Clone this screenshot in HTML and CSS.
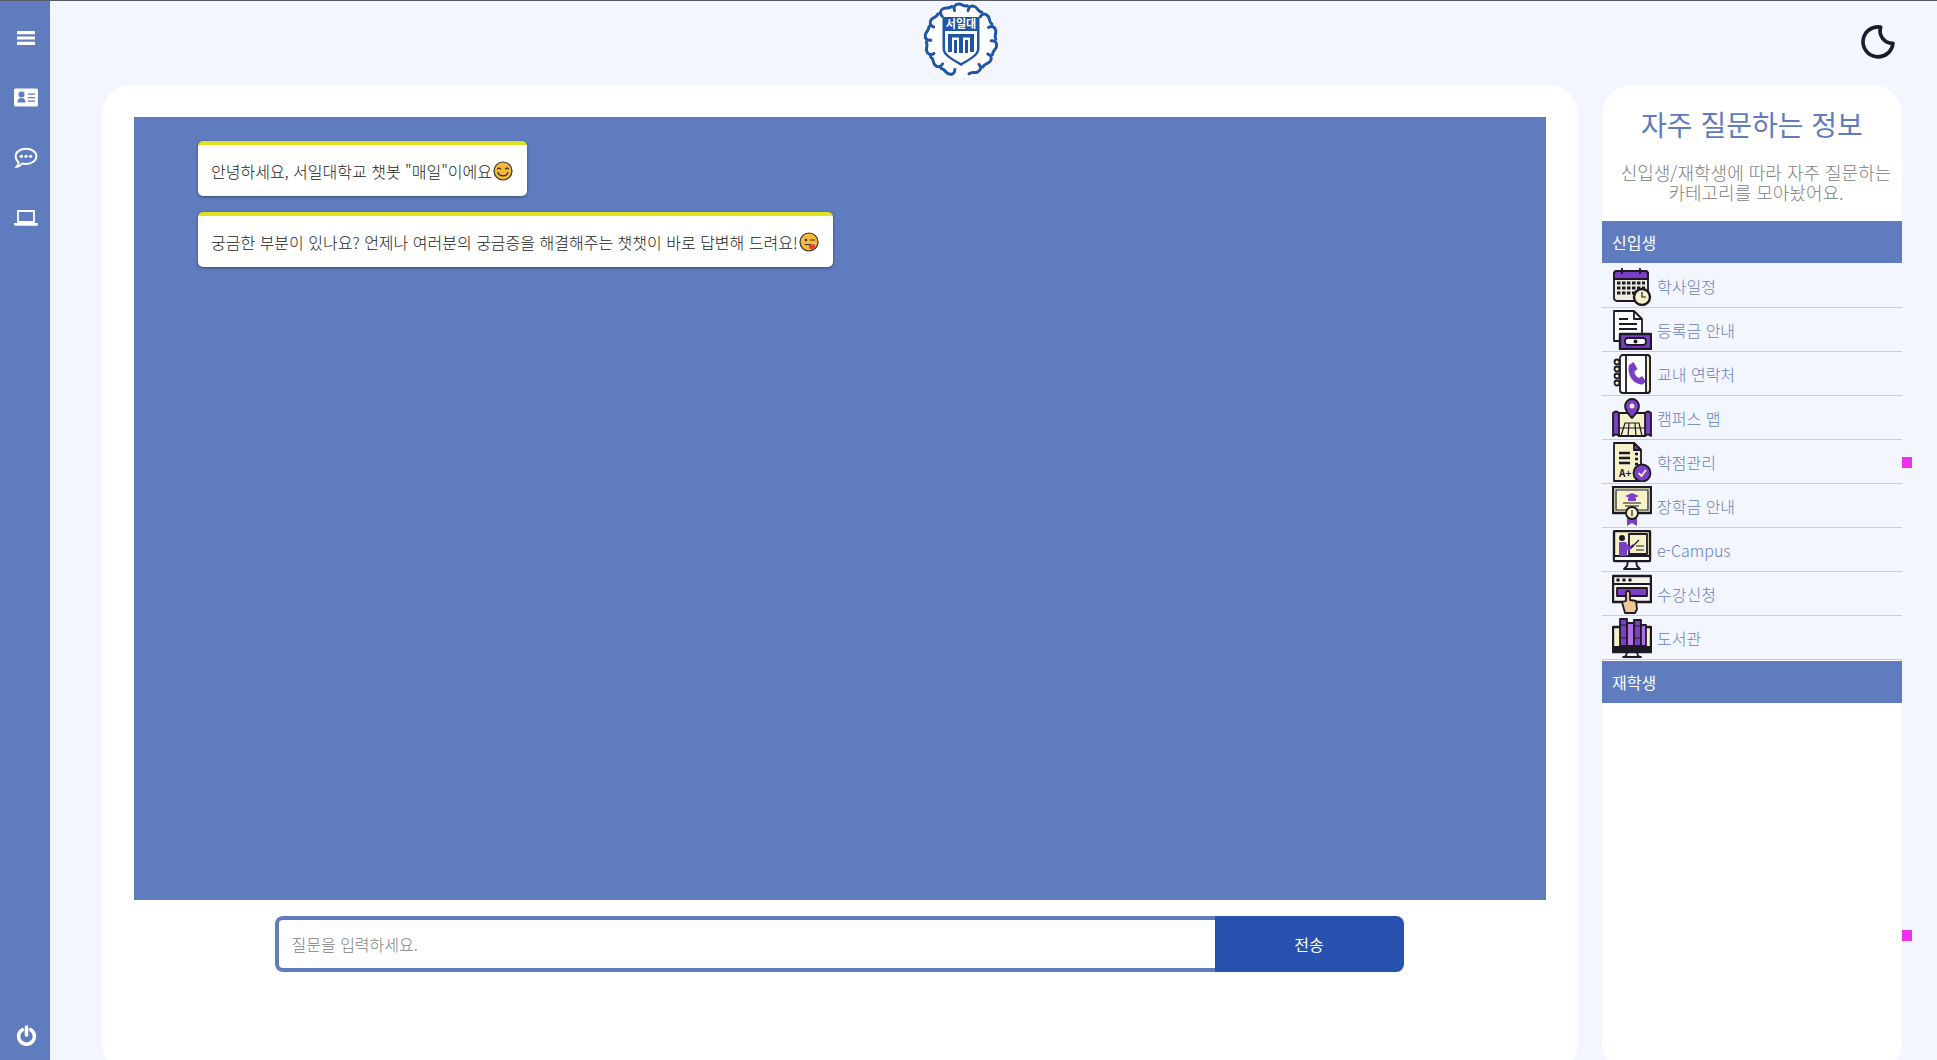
FILE: index.html
```html
<!DOCTYPE html><html lang="ko">
<head>
  <meta charset="UTF-8">
  <meta name="viewport" content="width=device-width, initial-scale=1.0">
  <title>서일대학교 챗봇</title>
  <link rel="stylesheet" href="styles.css">
</head>
<body>
  <aside class="sidebar">
    <nav class="side-nav">
      <a class="side-link"><svg class="side-icon menu-icon" viewBox="0 0 18 16"><path d="M0 1h18v3.200H0zM0 6.400h18v3.200H0zM0 11.800h18V15H0z" fill="#fff"/></svg></a>
      <a class="side-link"><svg class="side-icon" viewBox="0 0 24 19"><path d="M1.500 0h21A1.500 1.500 0 0 1 24 1.500v15a1.500 1.500 0 0 1-1.500 1.500h-21A1.500 1.500 0 0 1 0 16.500v-15A1.500 1.500 0 0 1 1.500 0z" fill="#fff"/><circle cx="7.500" cy="6" r="3" fill="#5f7cbf"/><path d="M3.500 14c0-3 1.500-4.500 4-4.500s4 1.500 4 4.500zM14 5h7v1.300h-7zM14 8.500h7v1.300h-7zM14 12h7v1.300h-7z" fill="#5f7cbf"/></svg></a>
      <a class="side-link"><svg class="side-icon" viewBox="0 0 22 20"><path d="M11 1.500c5.300 0 9.500 3 9.500 7s-4.200 7-9.500 7c-1.200 0-2.300-.1-3.300-.4C6.300 16.600 4.500 18 2.500 18c1-1 1.700-2.300 1.800-3.900C2.600 12.800 1.500 10.800 1.500 8.500c0-4 4.200-7 9.500-7z" fill="none" stroke="#fff" stroke-width="1.800"/><circle cx="6.800" cy="8.500" r="1.500" fill="#fff"/><circle cx="11" cy="8.500" r="1.500" fill="#fff"/><circle cx="15.200" cy="8.500" r="1.500" fill="#fff"/></svg></a>
      <a class="side-link"><svg class="side-icon" viewBox="0 0 24 16"><path d="M4 1h16v11H4z" fill="none" stroke="#fff" stroke-width="1.800"/><path d="M0 13h24v1.200a1.500 1.500 0 0 1-1.500 1.500h-21A1.500 1.500 0 0 1 0 14.200z" fill="#fff"/></svg></a>
    </nav>
    <a class="side-link"><svg class="side-icon power-icon" viewBox="0 0 20 20"><path d="M6 4.500a7.500 7.500 0 1 0 8 0" fill="none" stroke="#fff" stroke-width="3.400" stroke-linecap="round"/><path d="M10 2v7.500" stroke="#fff" stroke-width="3.400" stroke-linecap="round"/></svg></a>
  </aside>

  <div class="page">
    <header class="topbar">
      <svg class="logo" viewBox="0 0 76 76">
        <defs>
          <path id="leaf" d="M31.500 8.500c-1.500-3.500.5-6.500 4.500-6.500 3.500 0 4.500 3 8.500 1.800" fill="none" stroke="#1f55a5" stroke-width="3" stroke-linecap="round"/>
        </defs>
        <circle cx="38" cy="38" r="38" fill="#fff"/>
        <use href="#leaf"/>
        <use href="#leaf" transform="rotate(26 38 38)"/>
        <use href="#leaf" transform="rotate(52 38 38)"/>
        <use href="#leaf" transform="rotate(78 38 38)"/>
        <use href="#leaf" transform="rotate(104 38 38)"/>
        <use href="#leaf" transform="rotate(130 38 38)"/>
        <use href="#leaf" transform="rotate(156 38 38)"/>
        <use href="#leaf" transform="rotate(-26 38 38)"/>
        <use href="#leaf" transform="rotate(-52 38 38)"/>
        <use href="#leaf" transform="rotate(-78 38 38)"/>
        <use href="#leaf" transform="rotate(-104 38 38)"/>
        <use href="#leaf" transform="rotate(-130 38 38)"/>
        <use href="#leaf" transform="rotate(-156 38 38)"/>
        <path d="M19.500 15h37v32c0 7-11 12-18.500 17C30.500 59 19.500 54 19.500 47z" fill="#1f55a5"/>
        <path d="M22 29h32v18c0 5.500-9 10-16 14-7-4-16-8.500-16-14z" fill="#fff"/>
        <path d="M25 32h26v3.500H25zM25 32h4v18h-4zM36 32h4v19h-4zM47 32h4v18h-4zM31 38h3v13h-3zM42 38h3v13h-3z" fill="#1f55a5"/>
        <text class="logo-text" x="38" y="26" text-anchor="middle">서일대</text>
      </svg>
      <svg class="moon" viewBox="0 0 24 24"><path d="M12 3c.132 0 .263 0 .393 0a7.500 7.500 0 0 0 7.370 9.750a9 9 0 1 1-7.763-9.750z" fill="none" stroke="#1a1c2e" stroke-width="2.200" stroke-linejoin="round"/></svg>
    </header>

    <div class="content">
      <main class="chat-card">
        <section class="chat-log">
          <div class="bubble">안녕하세요, 서일대학교 챗봇 "매일"이에요<svg class="emoji" viewBox="0 0 20 20"><circle cx="10" cy="10" r="9" fill="#f5b93a" stroke="#33302a" stroke-width="1.200"/><path d="M4.500 8c.7-1.300 2.300-1.300 3 0M12.500 8c.7-1.300 2.300-1.300 3 0M5 11.500c1.500 4.500 8.500 4.500 10 0" fill="none" stroke="#33302a" stroke-width="1.200" stroke-linecap="round"/></svg></div>
          <div class="bubble">궁금한 부분이 있나요? 언제나 여러분의 궁금증을 해결해주는 챗챗이 바로 답변해 드려요!<svg class="emoji" viewBox="0 0 20 20"><circle cx="10" cy="10" r="9" fill="#f5b93a" stroke="#33302a" stroke-width="1.200"/><circle cx="7" cy="8" r="1.200" fill="#33302a"/><path d="M11.500 8h4M6 12.500h6" fill="none" stroke="#33302a" stroke-width="1.200" stroke-linecap="round"/><path d="M10 12.500h6v2a3 3 0 0 1-6 0z" fill="#e0413a"/></svg></div>
        </section>
        <form class="chat-form">
          <input class="chat-input" type="text" placeholder="질문을 입력하세요.">
          <button class="chat-send" type="button">전송</button>
        </form>
      </main>

      <aside class="faq">
        <h2 class="faq-title">자주 질문하는 정보</h2>
        <p class="faq-desc">신입생/재학생에 따라 자주 질문하는<br>카테고리를 모아놨어요.</p>
        <div class="faq-head">신입생</div>
        <ul class="faq-list">
          <li class="faq-item"><svg class="faq-icon" viewBox="0 0 40 40"><rect class="line grey" x="2" y="5" width="34" height="30" rx="3"/><path class="line purple" d="M2 13V8a3 3 0 0 1 3-3h28a3 3 0 0 1 3 3v5z"/><path class="line" d="M10 2v6M28 2v6"/><path class="grid" d="M5 17h28M5 22h28M5 27h28"/><circle class="line cream thick" cx="30" cy="31" r="8"/><path class="line thin" d="M30 26v5h4"/></svg><span>학사일정</span></li>
          <li class="faq-item"><svg class="faq-icon" viewBox="0 0 40 40"><path class="line white" d="M2 1h20l8 8v22H2z"/><path class="line" d="M22 1v8h8M7 9h9M7 14h18M7 19h18M7 24h5"/><rect class="line purple thick" x="8" y="24" width="31" height="15"/><rect class="line white" x="13" y="28" width="21" height="7" rx="3"/><circle class="dark" cx="23.500" cy="31.500" r="2"/></svg><span>등록금 안내</span></li>
          <li class="faq-item"><svg class="faq-icon" viewBox="0 0 40 40"><rect class="line white" x="8" y="1" width="30" height="38" rx="3"/><path class="line" d="M14 1v38"/><path class="line cream" d="M34 1h1a3 3 0 0 1 3 3v32a3 3 0 0 1-3 3h-1z"/><circle class="line cream" cx="5" cy="8" r="2.500"/><circle class="line cream" cx="5" cy="15" r="2.500"/><circle class="line cream" cx="5" cy="22" r="2.500"/><circle class="line cream" cx="5" cy="29" r="2.500"/><path class="purple-fill" d="M17 11l4.500-3 4 7-3 2.500c0 3 2 5.500 4.500 6.500l3-2 4 5.500-3.500 3C21 30.500 15 21 17 11z"/></svg><span>교내 연락처</span></li>
          <li class="faq-item"><svg class="faq-icon" viewBox="0 0 40 40"><path class="line purple" d="M1 15c2-2 4-2 6 0v23c-2-2-4-2-6 0zM33 15c2-2 4-2 6 0v23c-2-2-4-2-6 0z"/><rect class="line cream" x="7" y="15" width="26" height="23"/><path class="line thin" d="M9 38l4-13h14l3 13M17 25l-1 13M23 25l1 13M7 30h26"/><path class="line purple" d="M20 20c-5-5-7-8-7-12a7 7 0 0 1 14 0c0 4-2 7-7 12z"/><circle class="cream" cx="20" cy="8" r="2.500"/></svg><span>캠퍼스 맵</span></li>
          <li class="faq-item"><svg class="faq-icon" viewBox="0 0 40 40"><path class="line cream" d="M2 1h20l7 7v31H2z"/><path class="line purple" d="M22 1l7 7h-7z"/><path class="line thick" d="M7 11h11M7 16h11M7 21h11M23 12h3M23 17h3M23 22h3"/><text class="grade" x="7" y="35">A+</text><circle class="line purple" cx="30" cy="31" r="8.500"/><path class="line cream-stroke" d="M26.500 31l3 3 4.500-6"/></svg><span>학점관리</span></li>
          <li class="faq-item"><svg class="faq-icon" viewBox="0 0 40 40"><rect class="line cream thick" x="1" y="1" width="38" height="26"/><rect class="line thin cream" x="4" y="4" width="32" height="20"/><path class="purple-fill" d="M20 7l7 3-7 3-7-3zM16 12h8v3h-8z"/><path class="line thin" d="M11 17h18M13 20h14"/><path class="purple-fill" d="M15 30h10v10l-5-3-5 3z"/><circle class="line cream" cx="20" cy="27" r="6"/><path class="line thin" d="M20 24v6"/></svg><span>장학금 안내</span></li>
          <li class="faq-item"><svg class="faq-icon" viewBox="0 0 40 40"><rect class="line cream thick" x="2" y="1" width="36" height="30" rx="1"/><path class="line white" d="M2 26h36v5H2z"/><path class="line" d="M16 31l-1 5-3 3h16l-3-3-1-5"/><rect class="line cream" x="17" y="4" width="18" height="20"/><path class="purple-fill" d="M7 12h7l3 5 4-3 1 2-5 5-2-1v6H7z"/><circle class="dark" cx="10" cy="8" r="3"/><path class="line thin" d="M24 16h8M24 20h8M19 18l8-8"/></svg><span>e-Campus</span></li>
          <li class="faq-item"><svg class="faq-icon" viewBox="0 0 40 40"><rect class="line cream-light thick" x="1" y="2" width="38" height="26"/><path class="line" d="M1 10h38"/><circle class="dark" cx="6" cy="6" r="1.800"/><circle class="dark" cx="12" cy="6" r="1.800"/><circle class="dark" cx="18" cy="6" r="1.800"/><rect class="line purple" x="5" y="14" width="30" height="8"/><path class="line skin" d="M13 39l-3-11 4-1V19a2 2 0 0 1 4 0v7l6 1 1 8-2 4z"/></svg><span>수강신청</span></li>
          <li class="faq-item"><svg class="faq-icon" viewBox="0 0 40 40"><rect class="line cream thick" x="1" y="9" width="38" height="25"/><path class="line" d="M15 34l-1 4-3 1h18l-3-1-1-4"/><path class="dark" d="M1 28h38v6H1z"/><rect class="line purple" x="8" y="1" width="7" height="27"/><rect class="line purple-light" x="15" y="5" width="7" height="23"/><rect class="line purple" x="22" y="2" width="7" height="26"/><rect class="line purple-light" x="29" y="7" width="5" height="21"/><path class="line thin" d="M8 7h7M8 20h7M22 8h7M22 20h7"/></svg><span>도서관</span></li>
        </ul>
        <div class="faq-head">재학생</div>
      </aside>
    </div>
  </div>

  <span class="marker marker-top"></span>
  <span class="marker marker-bottom"></span>
</body>
</html>
```

FILE: styles.css
```css
* {
  box-sizing: border-box;
}
html, body {
  height: 100%;
}
body {
  margin: 0;
  display: flex;
  height: 100vh;
  overflow: hidden;
  position: relative;
  font-family: "Noto Sans CJK KR", "Noto Sans", sans-serif;
  font-weight: 300;
  background: #f3f6fe;
  color: #333;
}

/* left bar */
.sidebar {
  width: 50px;
  flex-shrink: 0;
  background: #5f7cbf;
  display: flex;
  flex-direction: column;
  justify-content: space-between;
  padding: 25px 0 13px 2px;
  border-top: 1px solid #555a66;
}
.side-nav {
  display: flex;
  flex-direction: column;
  gap: 36px;
}
.side-link {
  display: flex;
  justify-content: center;
  align-items: center;
  height: 24px;
}
.side-icon {
  width: 24px;
  height: 24px;
}
.menu-icon {
  width: 18px;
  height: 16px;
}
.power-icon {
  width: 21px;
  height: 21px;
}

/* page */
.page {
  flex: 1;
  min-width: 0;
  display: flex;
  flex-direction: column;
}
.topbar {
  height: 85px;
  flex-shrink: 0;
  display: flex;
  justify-content: space-between;
  align-items: center;
  border-top: 1px solid #555a66;
  padding: 0 37px 6px 873px;
  background: #f3f6fe;
}
.logo {
  width: 76px;
  height: 76px;
}
.logo-text {
  font-size: 11px;
  font-weight: 700;
  fill: #fff;
}
.moon {
  width: 40px;
  height: 40px;
  margin-top: 3px;
}
.content {
  display: flex;
  gap: 24px;
  padding-left: 52px;
}

/* chat */
.chat-card {
  width: 1476px;
  height: 988px;
  flex-shrink: 0;
  background: #fff;
  border-radius: 30px;
  padding: 32px;
  display: flex;
  flex-direction: column;
  align-items: center;
}
.chat-log {
  width: 100%;
  height: 783px;
  background: #5f7cbf;
  padding: 24px 64px;
  display: flex;
  flex-direction: column;
  align-items: flex-start;
  gap: 16px;
}
.bubble {
  height: 55px;
  display: flex;
  align-items: center;
  gap: 1px;
  padding: 1px 14px 0 13px;
  background: #fff;
  border-top: 4px solid #dfe21e;
  border-radius: 5px;
  box-shadow: 0 1px 3px rgba(0, 0, 0, 0.4);
  font-size: 16px;
  color: #222;
}
.emoji {
  width: 20px;
  height: 20px;
  flex-shrink: 0;
}
.chat-form {
  width: 1129px;
  height: 56px;
  margin: 16px 2px 0 0;
  display: flex;
}
.chat-input {
  flex: 1;
  border: 4px solid #5f7cbf;
  border-right: none;
  border-radius: 8px 0 0 8px;
  padding: 0 13px;
  font-family: inherit;
  font-weight: 300;
  font-size: 16px;
  background: #fff;
  outline: none;
}
.chat-input::placeholder {
  color: #808080;
}
.chat-send {
  width: 189px;
  border: none;
  border-radius: 0 8px 8px 0;
  background: #2751ae;
  color: #fff;
  font-family: inherit;
  font-size: 16px;
}

/* right panel */
.faq {
  width: 300px;
  height: 988px;
  flex-shrink: 0;
  background: #fff;
  border-radius: 30px;
}
.faq-title {
  margin: 0;
  padding-top: 18px;
  text-align: center;
  font-size: 28px;
  line-height: 42px;
  font-weight: 400;
  color: #5f7cbf;
}
.faq-desc {
  margin: 17px 0 0;
  padding-left: 8px;
  height: 59px;
  text-align: center;
  font-size: 18px;
  line-height: 20px;
  color: #808080;
}
.faq-head {
  height: 42px;
  padding-left: 10px;
  display: flex;
  align-items: center;
  background: #5f7cbf;
  color: #fff;
  font-size: 16px;
  font-weight: 400;
}
.faq-list {
  list-style: none;
  margin: 0;
  padding: 1px 0 0;
  background: #f3f6fe;
}
.faq-item {
  height: 44px;
  display: flex;
  align-items: center;
  gap: 5px;
  padding-left: 10px;
  border-bottom: 1px solid #c9ced6;
  font-size: 16px;
  color: #6a80bb;
}
.faq-item:last-child {
  margin-bottom: 1px;
}
.faq-icon {
  width: 40px;
  height: 40px;
  flex-shrink: 0;
}

/* icon paints */
.line {
  fill: none;
  stroke: #1d1a26;
  stroke-width: 1.800;
  stroke-linejoin: round;
}
.thin {
  stroke-width: 1.200;
}
.thick {
  stroke-width: 2.400;
}
.grid {
  fill: none;
  stroke: #1d1a26;
  stroke-width: 3;
  stroke-dasharray: 3.500 1.500;
}
.line.cream, .cream {
  fill: #f6f1c9;
}
.line.cream-light {
  fill: #f7f2ea;
}
.line.grey {
  fill: #efeadf;
}
.line.white {
  fill: #fff;
}
.line.purple {
  fill: #7a3fc4;
}
.line.purple-light {
  fill: #b06fe0;
}
.line.skin {
  fill: #eec795;
}
.cream-stroke {
  stroke: #f6f1c9;
}
.purple-fill {
  fill: #7a3fc4;
}
.dark {
  fill: #1d1a26;
}
.grade {
  font-size: 10px;
  font-weight: 700;
  fill: #1d1a26;
}

/* small pink marks at the panel edge */
.marker {
  position: absolute;
  left: 1902px;
  width: 10px;
  height: 11px;
  background: #ee2fee;
}
.marker-top {
  top: 457px;
}
.marker-bottom {
  top: 930px;
}
```
